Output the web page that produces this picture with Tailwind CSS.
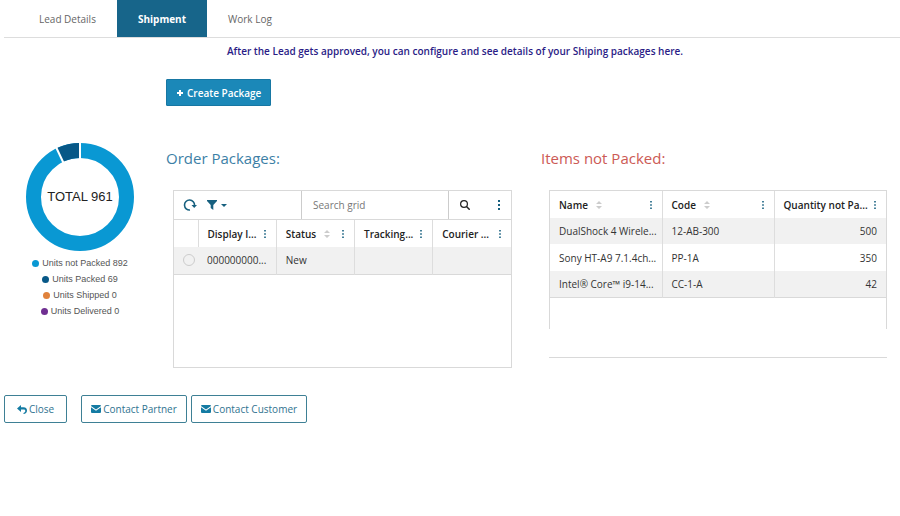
<!DOCTYPE html>
<html lang="en">
<head>
  <meta charset="UTF-8" />
  <meta name="viewport" content="width=device-width, initial-scale=1.0" />
  <title>Shipment</title>
  <script src="https://cdn.jsdelivr.net/npm/@tailwindcss/browser@4"></script>
</head>
<body class="bg-white font-['Open_Sans',sans-serif] text-[10px] leading-4 text-[#333]">
  <!-- Shared icons -->
  <svg class="hidden">
    <symbol id="dots" viewBox="0 0 2 10"><path d="M0 0h2v2H0zM0 4h2v2H0zM0 8h2v2H0z" /></symbol>
    <symbol id="sort" viewBox="0 0 6 8"><path d="M3 0l3 3H0zM3 8l3-3H0z" /></symbol>
    <symbol id="mail" viewBox="0 0 10 8"><path d="M0 1q0-1 1-1h8q1 0 1 1L5 4.600zM0 2.200l5 3.600 5-3.600V7q0 1-1 1H1Q0 8 0 7z" /></symbol>
  </svg>

  <nav class="ml-1 flex h-[38px] border-b border-[#ddd] pl-[14px] text-[#666]">
    <button type="button" class="px-[21px]">Lead Details</button>
    <button type="button" class="h-[37px] bg-[#17658a] px-[21px] font-bold text-white">Shipment</button>
    <button type="button" class="px-[21px]">Work Log</button>
  </nav>

  <main class="pl-1">
    <p class="pt-[5px] pl-[6px] text-center font-semibold text-[#2a1c86]">After the Lead gets approved, you can configure and see details of your Shiping packages here.</p>

    <div class="mt-5 ml-[162px]">
      <button type="button" class="flex h-[27px] items-center gap-[3px] rounded-[1px] border border-[#1777a3] bg-[#1b88b8] px-[9px] font-semibold text-white">
        <svg class="size-2" viewBox="0 0 8 8" stroke="currentColor" stroke-width="2"><path d="M4 1v6M1 4h6" /></svg>
        Create Package
      </button>
    </div>

    <div class="mt-9 flex pr-[13px]">
      <!-- Units chart -->
      <section class="w-[152px] shrink-0 pt-px font-['Liberation_Sans',sans-serif]">
        <svg class="mx-auto block" width="108" height="108" viewBox="0 0 108 108">
          <circle cx="54" cy="54" r="46.500" fill="none" stroke="#0998d3" stroke-width="15" />
          <path d="M54 7.500A46.500 46.500 0 0 0 33.800 12.120" fill="none" stroke="#075887" stroke-width="15" />
          <path d="M54 0v16M30 4l8 17" stroke="#fff" stroke-width="2" />
          <text x="54" y="58" text-anchor="middle" font-size="13" fill="#222">TOTAL 961</text>
        </svg>
        <ul class="mt-1 text-center text-[9px] text-[#555]">
          <li class="flex items-center justify-center gap-[3px]"><span class="size-[7px] rounded-full bg-[#0998d3]"></span>Units not Packed 892</li>
          <li class="flex items-center justify-center gap-[3px]"><span class="size-[7px] rounded-full bg-[#075887]"></span>Units Packed 69</li>
          <li class="flex items-center justify-center gap-[3px]"><span class="size-[7px] rounded-full bg-[#e0823c]"></span>Units Shipped 0</li>
          <li class="flex items-center justify-center gap-[3px]"><span class="size-[7px] rounded-full bg-[#6f2f91]"></span>Units Delivered 0</li>
        </ul>
      </section>

      <section class="ml-[10px] min-w-0 flex-1">
        <h2 class="pt-1 text-[15px] leading-6 text-[#3d7fa6]">Order Packages:</h2>
        <div class="mt-5 ml-[7px] h-[178px] border border-[#d9d9d9]">
          <div class="flex h-[29px] items-stretch border-b border-[#d9d9d9] text-[#17607f]">
            <button type="button" aria-label="Refresh" class="ml-[9px]">
              <svg width="14" height="12" viewBox="0 0 14 12"><path d="M7 11A5 5 0 1 1 11.500 6.500" fill="none" stroke="currentColor" stroke-width="1.600" /><path d="M8.500 6H14l-2.800 3z" fill="currentColor" /></svg>
            </button>
            <button type="button" aria-label="Filter" class="ml-[10px] flex items-center gap-1">
              <svg width="10" height="10" viewBox="0 0 10 10" fill="currentColor"><path d="M0 0h10v1L6.300 5v5L3.700 8V5L0 1z" /></svg>
              <svg width="6" height="3" viewBox="0 0 6 3" fill="currentColor"><path d="M0 0h6L3 3z" /></svg>
            </button>
            <input type="text" aria-label="Search grid" placeholder="Search grid" class="ml-auto w-[148px] border-x border-[#ccc] px-[11px] outline-none placeholder:text-[#777]" />
            <button type="button" aria-label="Search" class="flex w-8 items-center justify-center text-[#222]">
              <svg width="10" height="10" viewBox="0 0 10 10" fill="none" stroke="currentColor" stroke-width="1.200"><circle cx="4" cy="4" r="3.400" /><path d="M6.500 6.500L9.700 9.700" stroke-width="1.500" /></svg>
            </button>
            <button type="button" aria-label="Grid menu" class="flex w-[30px] items-center justify-end pr-[11px]"><svg class="h-[10px] w-[2px]" fill="currentColor"><use href="#dots" /></svg></button>
          </div>
          <table class="w-full table-fixed border-collapse text-left whitespace-nowrap">
            <thead>
              <tr class="h-[27px] text-[#222]">
                <th class="w-6 border-r border-[#ddd]"></th>
                <th class="border-r border-[#ddd] pr-[10px] pl-[9px] font-semibold"><div class="flex items-center">Display I...<svg class="ml-auto h-2 w-[2px] fill-[#17607f]"><use href="#dots" /></svg></div></th>
                <th class="border-r border-[#ddd] pr-[10px] pl-[9px] font-semibold"><div class="flex items-center">Status<svg class="ml-2 h-2 w-[6px] fill-[#ccc]"><use href="#sort" /></svg><svg class="ml-auto h-2 w-[2px] fill-[#17607f]"><use href="#dots" /></svg></div></th>
                <th class="border-r border-[#ddd] pr-[10px] pl-[9px] font-semibold"><div class="flex items-center">Tracking...<svg class="ml-auto h-2 w-[2px] fill-[#17607f]"><use href="#dots" /></svg></div></th>
                <th class="pr-[10px] pl-[9px] font-semibold"><div class="flex items-center">Courier ...<svg class="ml-auto h-2 w-[2px] fill-[#17607f]"><use href="#dots" /></svg></div></th>
              </tr>
            </thead>
            <tbody>
              <tr class="h-[27px] border-b border-[#d9d9d9] bg-[#f1f1f1]">
                <td class="pl-[9px]"><input type="radio" name="package" aria-label="Select package" class="block size-3 appearance-none rounded-full border border-[#ccc]" /></td>
                <td class="border-r border-[#ddd] pl-[9px]">000000000...</td>
                <td class="border-r border-[#ddd] pl-[9px]">New</td>
                <td class="border-r border-[#ddd]"></td>
                <td></td>
              </tr>
            </tbody>
          </table>
        </div>
      </section>

      <section class="ml-[29px] min-w-0 flex-1">
        <h2 class="pt-1 text-[15px] leading-6 text-[#cc5a55]">Items not Packed:</h2>
        <div class="mt-5 ml-2 h-[139px] border-x border-t border-[#d9d9d9]">
          <table class="w-full table-fixed border-collapse text-left whitespace-nowrap">
            <thead>
              <tr class="h-[27px] text-[#222]">
                <th class="border-r border-[#ddd] pr-[10px] pl-[9px] font-semibold"><div class="flex items-center">Name<svg class="ml-2 h-2 w-[6px] fill-[#ccc]"><use href="#sort" /></svg><svg class="ml-auto h-2 w-[2px] fill-[#17607f]"><use href="#dots" /></svg></div></th>
                <th class="border-r border-[#ddd] pr-[10px] pl-[9px] font-semibold"><div class="flex items-center">Code<svg class="ml-2 h-2 w-[6px] fill-[#ccc]"><use href="#sort" /></svg><svg class="ml-auto h-2 w-[2px] fill-[#17607f]"><use href="#dots" /></svg></div></th>
                <th class="pr-[10px] pl-[9px] font-semibold"><div class="flex items-center">Quantity not Pa...<svg class="ml-auto h-2 w-[2px] fill-[#17607f]"><use href="#dots" /></svg></div></th>
              </tr>
            </thead>
            <tbody>
              <tr class="h-[26px] bg-[#f1f1f1]">
                <td class="border-r border-[#ddd] pl-[9px]">DualShock 4 Wirele...</td>
                <td class="border-r border-[#ddd] pl-[9px]">12-AB-300</td>
                <td class="pr-[9px] text-right">500</td>
              </tr>
              <tr class="h-[27px]">
                <td class="border-r border-[#ddd] pl-[9px]">Sony HT-A9 7.1.4ch...</td>
                <td class="border-r border-[#ddd] pl-[9px]">PP-1A</td>
                <td class="pr-[9px] text-right">350</td>
              </tr>
              <tr class="h-[26px] border-b border-[#d9d9d9] bg-[#f1f1f1]">
                <td class="border-r border-[#ddd] pl-[9px]">Intel® Core™ i9-14...</td>
                <td class="border-r border-[#ddd] pl-[9px]">CC-1-A</td>
                <td class="pr-[9px] text-right">42</td>
              </tr>
            </tbody>
          </table>
        </div>
        <hr class="mt-7 ml-2 border-[#d9d9d9]" />
      </section>
    </div>

    <footer class="mt-[27px] flex gap-1 text-[#2f7390]">
      <button type="button" class="mr-[10px] flex h-7 items-center gap-[2px] rounded-[2px] border border-[#3e8095] px-3">
        <svg class="fill-[#147ba3]" width="10" height="9" viewBox="0 0 10 9"><path d="M0 3.500L4 0v2.300h2.500C9 2.300 10 4 10 5.500 10 7.500 8.500 9 6.500 9V8C8 7.500 8.300 6.700 8.300 6 8.300 5 7.500 4.600 6.500 4.600H4V7z" /></svg>
        Close
      </button>
      <button type="button" class="flex h-7 items-center gap-[2px] rounded-[2px] border border-[#3e8095] px-[9px]">
        <svg class="h-2 w-[10px] fill-[#147ba3]"><use href="#mail" /></svg>
        Contact Partner
      </button>
      <button type="button" class="flex h-7 items-center gap-[2px] rounded-[2px] border border-[#3e8095] px-[9px]">
        <svg class="h-2 w-[10px] fill-[#147ba3]"><use href="#mail" /></svg>
        Contact Customer
      </button>
    </footer>
  </main>
</body>
</html>
